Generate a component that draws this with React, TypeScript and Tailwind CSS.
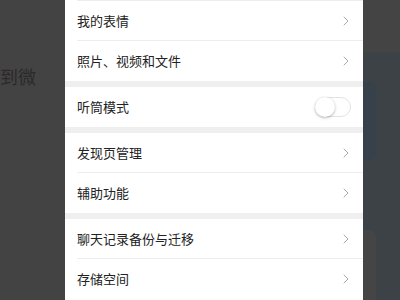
import { ChevronRight } from "lucide-react";

type Item = { label: string; toggle?: boolean };

const groups: Item[][] = [
  [{ label: "我的表情" }, { label: "照片、视频和文件" }],
  [{ label: "听筒模式", toggle: true }],
  [{ label: "发现页管理" }, { label: "辅助功能" }],
  [{ label: "聊天记录备份与迁移" }, { label: "存储空间" }],
];

const Row = ({ item, last }: { item: Item; last: boolean }) => (
  <div className="flex h-[40px] items-center pl-[12px]">
    <div className={`flex flex-1 h-full items-center pr-[12px] ${last ? "" : "border-b border-[#ededed]"}`}>
      <span className="flex-1 text-[13px] text-[#222]">{item.label}</span>
      {item.toggle ? (
        <div className="relative w-[36px] h-[20px] rounded-full border border-[#e3e3e3] bg-white">
          <div className="absolute -left-px -top-px w-[20px] h-[20px] rounded-full bg-white shadow-[0_1px_3px_rgba(0,0,0,0.3)]" />
        </div>
      ) : (
        <ChevronRight size={16} strokeWidth={1.5} className="text-[#aaa] -mr-[3px]" />
      )}
    </div>
  </div>
);

export default function App() {
  return (
    <div
      className="flex w-[400px] h-[300px] overflow-hidden bg-[#444]"
      style={{ fontFamily: '"Noto Sans CJK SC", "Noto Sans", sans-serif' }}
    >
      <div className="w-[65px] shrink-0 overflow-hidden bg-[#434343]">
        <div className="mt-[64px] whitespace-nowrap text-[18px] leading-[24px] text-[#2a2a2a]">
          到微
        </div>
      </div>

      <div className="w-[298px] shrink-0 bg-white">
        <div className="ml-[12px] h-[1px] border-b border-[#ededed]" />
        {groups.map((g, gi) => (
          <div key={gi}>
            {gi > 0 && <div className="h-[6px] bg-[#efefef]" />}
            {g.map((item, i) => (
              <Row key={item.label} item={item} last={i === g.length - 1} />
            ))}
          </div>
        ))}
      </div>

      <div className="flex-1 flex flex-col">
        <div className="h-[52px] bg-[#444]" />
        <div className="flex-1 flex flex-col bg-[#3c4245]">
          <div className="mt-[30px] h-[78px] w-[13px] rounded-r-[8px] bg-[#36414b]" />
          <div className="mt-[70px] flex-1 w-[13px] rounded-tr-[8px] bg-[#454545]" />
        </div>
      </div>
    </div>
  );
}
